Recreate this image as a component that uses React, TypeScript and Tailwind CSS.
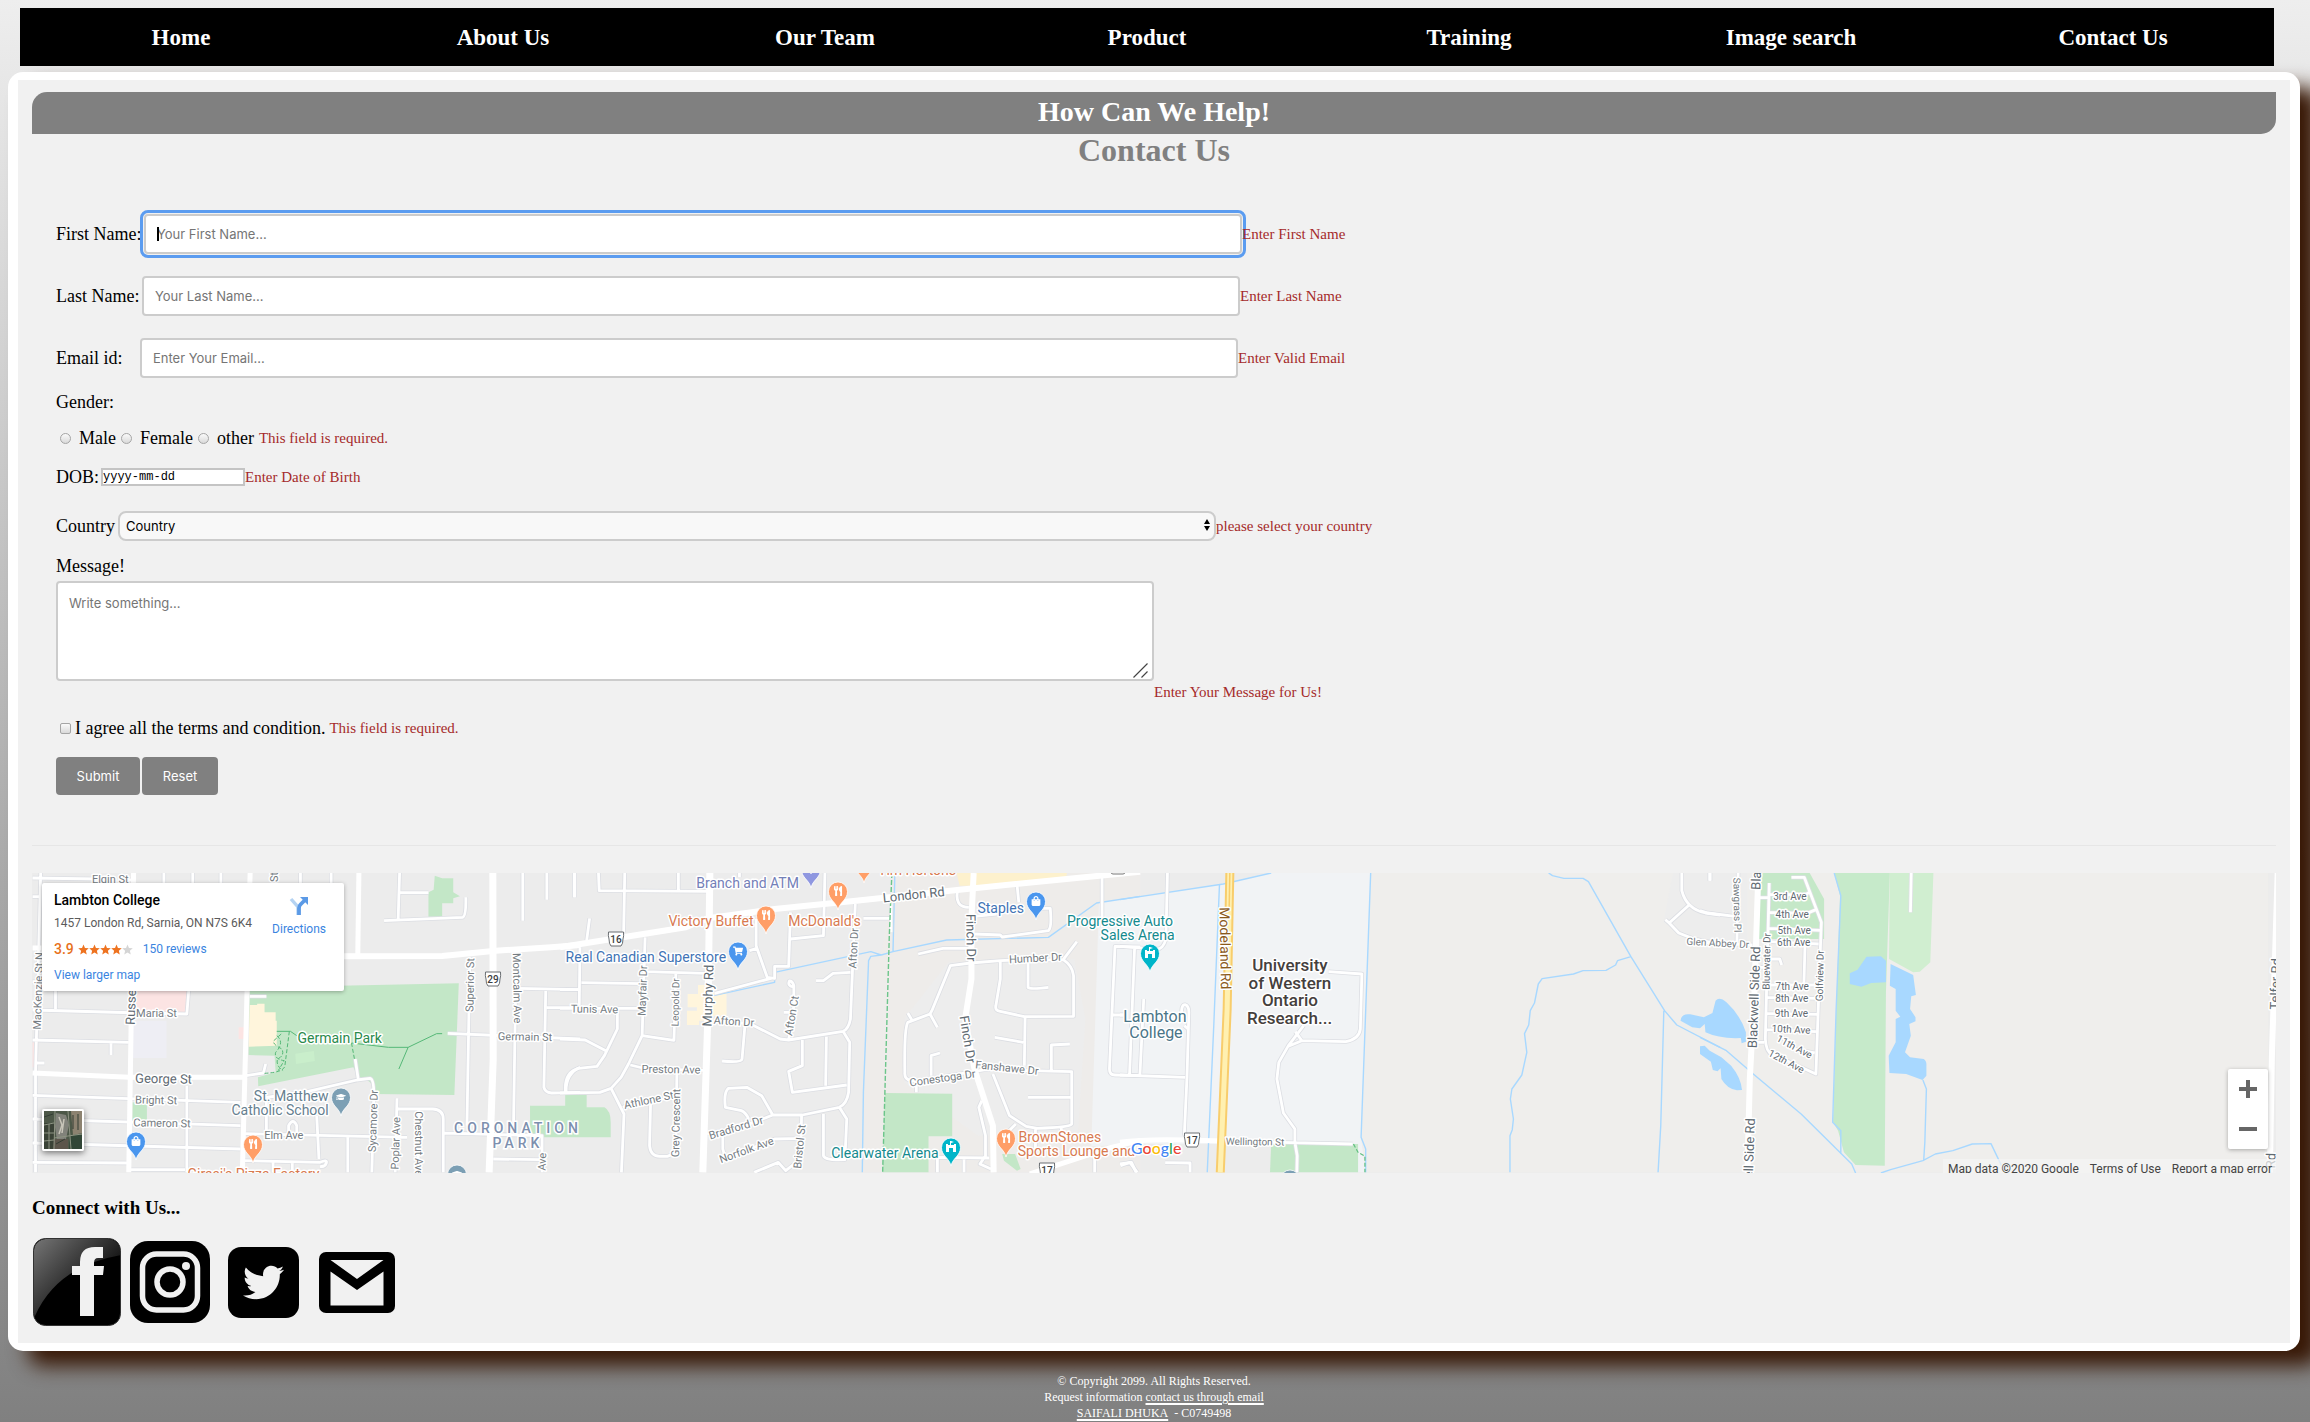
import React from "react";
import { FaTwitter, FaUtensils, FaShoppingCart, FaShoppingBag, FaGraduationCap, FaDollarSign } from "react-icons/fa";

const NAV = ["Home", "About Us", "Our Team", "Product", "Training", "Image search", "Contact Us"];

/* ---------- Map drawing ---------- */

type Tile = { x: number; k: number };
const TILE_Y = 860;
const TILE_KY = 1 / 3;
const A: Tile = { x: 0, k: 0.37 };
const B: Tile = { x: 560, k: 0.37 };
const C: Tile = { x: 1120, k: 0.3827 };
const D: Tile = { x: 1700, k: 0.389 };

function TileGroup({ t, children }: { t: Tile; children: React.ReactNode }) {
  return <g transform={`translate(${t.x} ${TILE_Y}) scale(${t.k} ${TILE_KY})`}>{children}</g>;
}

function Line({ d, w, c, dash }: { d: string; w: number; c: string; dash?: string }) {
  return (
    <path d={d} fill="none" stroke={c} strokeWidth={w} strokeDasharray={dash} strokeLinejoin="round" strokeLinecap="butt" vectorEffect="non-scaling-stroke" />
  );
}

const MINOR: [Tile, string][] = [
  [A, "M88 57 L262 60 M335 62 L355 63 M443 42V72 M521 42V72 M597 42V72 M812 42V72 M895 42V72 M1080 42 L1076 184 M1080 101 H1158 M1038 185 L1250 175 Q1260 173 1259 115 M1413 42 V185 M1478 42 V122 M1552 42 V115 M110 42 L96 640 V940 M88 113 H110 M88 368 H108 M150 396 V450 M88 453 L380 462 L505 465 L510 396 M88 543 L348 550 M300 550 V588 M96 612 H120 M505 680 V940 M88 709 L650 730 M88 780 L650 800 M88 852 L650 870 M88 910 L350 912 M350 932 H500"],
  [A, "M660 824 L1100 835 M720 722 V820 M780 828 V800 Q792 775 802 800 V828 M856 770 L862 900 M660 905 L865 910 Q885 900 882 912 Q878 925 865 922 M675 412 H720 M665 650 L712 642 L718 615 M690 720 L830 698 L965 663 L1000 658 Q1012 660 1010 720 L1005 940 M960 600 L968 660 M1073 718 L1068 940 M1073 750 H1170 Q1198 752 1198 780 V940 M1132 750 L1130 940 M1198 822 L1465 830 V940 M940 832 V940 M738 905V940 M790 905V940 M1270 295 L1262 800 M1395 290 L1388 790 M1210 523 L1568 540 M1400 388 L1568 392 M1475 392 L1470 685 Q1473 700 1490 702 L1568 700 M1478 446 H1568 M1530 700 Q1528 645 1568 625 M1333 900 L1460 902"],
  [B, "M40 42 V115 M104 42 L106 95 L400 97 M175 42 L172 220 M320 42 V97 M485 42 V55 M80 178 L72 245 M54 265 L52 440 M0 392 H52 M58 371 L220 374 M230 235 L222 530 L185 615 L165 655 L138 688 L108 700 L0 702 M230 338 L395 343 M313 345 L308 544 L222 530 M0 448 H220 M155 455 L155 510 L120 590 L100 622 L50 628 Q10 640 15 700 M0 540 L68 543 L124 575 M190 618 L235 630 L390 634 M138 688 L173 765 L166 940 M170 745 L200 730 L320 715 M316 635 L313 870 Q310 885 290 892 H270 Q245 892 242 860 L245 725"],
  [B, "M530 180 L530 260 L560 355 L580 358 V322 H618 L623 160 M512 275 L532 268 M623 240 L712 230 L716 42 M798 135 L785 480 Q780 510 765 517 L618 543 L595 540 L515 495 L415 483 M418 403 L580 355 M820 178 H892 M895 130 V220 M785 340 L738 343 L712 365 H692 M618 543 L632 440 L632 380 Q628 365 620 366 Q614 380 630 384 M605 460 H625 M500 498 L492 600 Q490 612 438 606 M655 543 L655 620 L618 637 L628 700 L775 678 M720 533 L718 680 M765 517 L783 550 L780 700 Q775 735 755 745 L655 768 L575 768 L500 800 L398 825 M575 768 L545 710 L505 685 L455 688 Q442 700 447 745 L490 755 Q502 760 510 780 M440 830 V870 Q445 900 460 895 L580 840 L655 838 M653 768 L650 900 L610 935 L590 910 L525 940 M712 765 V890 Q715 905 770 902 L775 780 L755 745"],
  [B, "M1235 75 L1240 130 M1075 92 Q1065 145 1105 145 M1120 225 L1190 228 L1195 234 L1320 215 Q1330 205 1325 148 H1290 M1120 172 L1180 165 M968 285 L1035 268 H1110 M1110 312 L1055 320 L1005 455 L1000 465 L940 490 Q930 510 932 640 Q930 662 950 665 L970 665 L1150 632 L1270 635 M940 462 L952 485 M1000 465 L1020 505 M1110 312 L1190 305 L1230 303 L1360 302 M1190 305 L1190 360 L1178 440 Q1175 455 1190 457 L1255 473 L1388 472 V350 Q1385 320 1360 302 L1397 248 M1265 312 V385 Q1270 392 1320 385 M1175 535 L1252 550 M1257 473 L1255 620 M1270 635 L1383 638 V795 Q1380 805 1290 808 L1260 802 L1215 770 L1170 645 M1328 635 V558 L1378 555 M1265 715 H1380 M1003 650 V590 L1027 582 M963 665 V700 M1140 725 L1132 745 L1150 830 V890 L1135 915 L1165 930 M1018 895 L1160 897 M1092 897 V940 M1020 897 V940 M1232 795 L1200 830 M1285 808 V870 M1355 800V840 M1445 890 V940 M1515 920 L1540 910 L1560 940 M1465 42 V205 M1495 468 H1530 M1568 264 L1500 262 L1485 630 Q1485 648 1500 648 L1568 650"],
  [C, "M124 42 L120 240 Q112 275 90 270 L0 262 M38 270 L25 645 M62 420 L52 648 M0 648 L170 655 M0 468 H10 M162 475 Q158 437 170 437 Q180 440 180 460 L175 655 L168 830 M168 500 L178 510 M270 846 L608 855 M0 915 L30 910 L42 940 M118 911 L183 912 V940 M480 500 L440 560 L415 610 L410 660 L427 762 L457 810 V850 L463 890 L462 940 M458 518 L475 545 M440 562 L475 545 L590 548 Q625 540 628 510 L632 345 L545 338 M1468 42 V95 Q1480 150 1530 162 L1568 168 M1490 135 L1435 192 L1425 182 M1435 192 L1460 222 L1500 240 L1568 255 M1541 42 V65"],
  [D, "M178 72 L168 540 Q170 580 185 585 L298 645 L310 250 L312 190 L268 55 H235 M150 116 H175 M178 107 H270 L282 100 M178 160 L275 163 L298 152 M175 208 L310 214 M178 248 L305 255 M172 378 H305 M170 415 L303 418 M170 463 L300 466 M170 512 L298 518 M270 258 L267 378 M175 300 H205 L210 318 M145 325 H165 M145 550 H165 M208 530 L240 570 L295 582 M543 42 L541 160 M98 42 L95 248 M26 42 V65 M0 155 L20 162 L90 172 M0 250 L135 258"],
];

const MAJOR: [Tile, string, number][] = [
  [A, "M361 42 L348 940 M676 42 L655 940", 5],
  [A, "M970 42 L967 285", 5],
  [A, "M88 267 H112 M88 642 L350 655 H665", 5],
  [A, "M920 292 L1195 291 L1340 275 L1490 265 L1568 258", 6],
  [A, "M1332 42 L1333 600 L1322 940", 7],
  [B, "M405 42 L400 460 L386 940", 7],
  [B, "M0 265 L340 205 L400 178 L580 150 L800 125 L1080 92 L1568 38", 6],
  [B, "M1118 42 L1112 180 L1112 360 L1095 480 L1120 630 L1170 800 L1172 940", 6],
  [B, "M1270 945 L1490 865 L1568 845", 5],
  [C, "M0 850 Q60 840 170 843 L270 846", 5],
  [D, "M150 42 L140 400 L128 660 L122 940", 6],
  [D, "M1485 42 L1470 600 L1465 940", 6],
];

const AREAS: [Tile, string, string][] = [
  [B, "#eeecea", "M905 42 H1568 V940 H817 L834 305 L868 288Z"],
  [B, "#ededed", "M930 480 L1050 310 L1390 300 L1420 480 L1400 820 L1130 830 L930 670Z"],
  [C, "#f1f3f5", "M-55 130 L0 122 L270 75 L395 42 H655 L630 835 L642 940 H440 L395 855 H60 L-75 862Z"],
  [C, "#efeeec", "M655 42 H3000 V940 H642 L630 835Z"],
  [C, "#ededed", "M1445 42 H1640 V250 L1500 245 L1420 190Z"],
  [A, "#c3e7c7", "M675 386 L1240 373 L1228 708 L1012 705 Q1010 660 968 655 L955 625 L698 682 L697 655 L745 640 L742 590 L672 588Z"],
  [A, "#fff5dc", "M675 438 H695 V434 H715 V460 H745 V485 H748 V560 L672 563Z"],
  [A, "#c9eecb", "M798 584 L848 576 L851 606 L800 615Z"],
  [A, "#c3e7c7", "M1175 50 L1195 58 H1225 V100 L1243 112 L1225 118 V133 H1195 V173 H1158 V100 L1172 92Z"],
  [A, "#fce4e3", "M367 396 H505 V460 H367Z M645 505H660V540H645Z M88 550H95V625H88Z"],
  [A, "#eeeef4", "M358 485 H450 V597 H358Z"],
  [A, "#c3e7c7", "M358 730 H397 V783 H358Z"],
  [B, "#c3e7c7", "M-81 740 H14 V708 H72 V745 H120 Q137 755 137 790 V835 H-81Z"],
  [B, "#c3e7c7", "M878 702 L1060 704 V832 H996 V940 H872Z M1195 885 H1230 L1245 930 L1235 935 L1200 905Z"],
  [B, "#fff5dc", "M345 405 H373 V378 H400 V402 H450 V470 H410 V485 H376 V498 H343 V455 H370 V445 H345Z"],
  [B, "#fdf1cd", "M1072 42 H1370 L1368 55 L1120 80 H1080Z"],
  [C, "#c3e7c7", "M395 855 H622 V940 H392Z"],
  [D, "#c5e8c8", "M152 42 H282 L319 120 V240 H150Z"],
  [D, "#c6eaca", "M345 42 H488 L478 400 L475 920 L400 918 L370 880 L355 815 L342 790 L350 450 L360 110Z"],
  [D, "#d0eed0", "M488 42 H600 L592 310 L565 338 L548 340 L486 300Z"],
  [D, "#a8d8ff", "M428 293 L465 292 L478 305 V370 L440 372 L415 383 L385 375 V343 L405 332Z M490 315 L548 348 L555 408 L543 412 L540 450 L554 475 V487 L538 495 L542 530 L527 580 L540 595 L575 600 Q583 605 582 620 V650 L572 663 L530 645 L487 642 L485 590 L503 550 V480 L515 473 L503 455 V390 L488 380Z"],
  [D, "#a8d8ff", "M-50 485 Q-48 462 -25 466 L10 475 L32 462 L40 425 Q50 412 68 430 Q105 470 118 520 V548 L107 553 L105 537 Q50 540 14 520 L12 495 L0 508 L-20 505Z M0 562 L12 560 L25 575 L55 595 L80 620 Q105 655 108 693 L95 694 Q70 690 55 660 L53 628 L45 637 L33 633 L28 608 L0 585Z"],
];

const WATER: [Tile, string][] = [
  [B, "M415 410 L580 370 V340 L840 278 L868 288 L900 278 L1045 243 L1320 235 L1450 132 L1568 112 M905 42 L900 278 M868 288 L840 292 L834 305 L820 700 L817 940"],
  [C, "M0 122 L270 75 L395 42 M260 75 L245 500 L228 940 M655 42 L630 835 L642 870 V940 M1120 42 L1130 50 L1160 58 H1210 L1224 68 L1335 293 L1423 455 L1455 498 L1568 565 M1335 293 L1300 305 L1295 318 L1270 334 L1210 335 L1185 345 L1103 359 L1093 375 L1083 432 L1072 455 L1068 498 L1057 524 L1063 580 L1050 648 L1024 690 L1020 720 L1028 780 L1025 812 L1019 830 V940 M1421 455 L1413 800 L1406 940"],
  [D, "M345 42 L362 110 L350 450 L341 790 L362 815 V885 M0 535 L68 575 L140 648 L260 765 L390 915 L400 942 M573 663 L582 690 L578 850 L575 905 M465 942 L490 932 L573 905 L605 885 L650 875 L700 855 L748 854 L775 920"],
];

type LabelSpec = [Tile, string, number, number, number, string, number?, number?];
const GREY = "#757c82";
const SLATE = "#5f6a72";
const LABELS: LabelSpec[] = [
  [A, "Elgin St", 298, 62, 11, GREY],
  [A, "St", 743, 54, 11, GREY, -90],
  [A, "MacKenzie St N", 104, 396, 11, GREY, -88],
  [A, "Russell", 354, 435, 13, SLATE, -88],
  [A, "Maria St", 423, 464, 11, GREY],
  [A, "George St", 442, 659, 13, SLATE, 1],
  [A, "Bright St", 422, 724, 11, GREY, 1],
  [A, "Cameron St", 438, 793, 11, GREY, 1],
  [A, "Elm Ave", 767, 828, 11, GREY],
  [A, "Sycamore Dr", 1009, 786, 11, GREY, -88],
  [A, "Poplar Ave", 1070, 853, 11, GREY, -88],
  [A, "Chestnut Ave", 1131, 854, 11, GREY, 90],
  [A, "Superior St", 1271, 378, 11, GREY, -89],
  [A, "Montcalm Ave", 1397, 387, 11, GREY, 89],
  [A, "Germain St", 1419, 534, 11, GREY, 1],
  [A, "Ave", 1466, 908, 11, GREY, -88],
  [B, "Tunis Ave", 93, 451, 11, GREY, 1],
  [B, "Mayfair Dr", 224, 395, 11, GREY, -88],
  [B, "Leopold Dr", 312, 430, 10, GREY, -89],
  [B, "Murphy Rd", 400, 410, 13, SLATE, -88],
  [B, "Afton Dr", 470, 488, 11, GREY, 4],
  [B, "Afton Ct", 627, 470, 11, GREY, -80],
  [B, "Afton Dr", 794, 268, 11, GREY, -87],
  [B, "London Rd", 956, 107, 13, SLATE, -6],
  [B, "Finch Dr", 1111, 236, 13, SLATE, 89],
  [B, "Finch Dr", 1102, 541, 13, SLATE, 81],
  [B, "Humber Dr", 1285, 298, 11, GREY, -3],
  [B, "Preston Ave", 300, 632, 11, GREY, 1],
  [B, "Athlone St", 240, 724, 11, GREY, -12],
  [B, "Grey Crescent", 314, 792, 11, GREY, -89],
  [B, "Bradford Dr", 476, 807, 11, GREY, -17],
  [B, "Norfolk Ave", 504, 874, 11, GREY, -20],
  [B, "Bristol St", 648, 863, 11, GREY, -84],
  [B, "Conestoga Dr", 1034, 658, 11, GREY, -8],
  [B, "Fanshawe Dr", 1208, 627, 11, GREY, 6],
  [C, "Wellington St", 353, 848, 10, GREY, 1],
  [C, "Glen Abbey Dr", 1562, 252, 10, GREY, 3],
  [C, "Modeland Rd", 275, 268, 14, "#8a5a1c", 89],
  [D, "Sawgrass Pl", 96, 138, 10, GREY, 89],
  [D, "Blackwell Side Rd", 148, -60, 13, SLATE, -88],
  [D, "Blackwell Side Rd", 139, 415, 13, SLATE, -88],
  [D, "Blackwell Side Rd", 125, 930, 13, SLATE, -88],
  [D, "Bluewater Dr", 171, 307, 10, SLATE, -89],
  [D, "Golfview Dr", 308, 350, 10, SLATE, -89],
  [D, "3rd Ave", 231, 113, 10, SLATE],
  [D, "4th Ave", 237, 165, 10, SLATE],
  [D, "5th Ave", 242, 213, 10, SLATE],
  [D, "6th Ave", 241, 251, 10, SLATE],
  [D, "7th Ave", 237, 381, 10, SLATE],
  [D, "8th Ave", 236, 417, 10, SLATE],
  [D, "9th Ave", 235, 464, 10, SLATE],
  [D, "10th Ave", 234, 511, 10, SLATE, 3],
  [D, "11th Ave", 243, 563, 10, SLATE, 28],
  [D, "12th Ave", 222, 607, 10, SLATE, 28],
  [D, "Telfer Rd", 1479, 375, 13, SLATE, -88],
  [D, "Rd", 1467, 905, 13, SLATE, -88],
  [A, "Germain Park", 918, 536, 14, "#2a8a4c"],
  [A, "St. Matthew", 787, 711, 14, "#66808f"],
  [A, "Catholic School", 757, 753, 14, "#66808f"],
  [A, "Girasi's Pizza Factory", 685, 944, 14, "#d87a50"],
  [B, "Branch and ATM", 507, 71, 14, "#7480b8"],
  [B, "Tim Hortons", 965, 34, 14, "#d87a50"],
  [B, "Victory Buffet", 408, 186, 14, "#d87a50"],
  [B, "McDonald's", 715, 186, 14, "#d87a50"],
  [B, "Real Canadian Superstore", 232, 293, 14, "#4274b5"],
  [B, "Staples", 1191, 146, 14, "#4274b5"],
  [B, "Clearwater Arena", 878, 881, 14, "#148a8e"],
  [B, "BrownStones", 1351, 833, 14, "#d87a50"],
  [B, "Sports Lounge and", 1396, 875, 14, "#d87a50"],
  [C, "Progressive Auto", 0, 185, 14, "#148a8e"],
  [C, "Sales Arena", 46, 227, 14, "#148a8e"],
  [C, "Lambton", 91, 471, 16, "#4a7588"],
  [C, "College", 94, 519, 16, "#4a7588"],
  [C, "University", 444, 317, 17, "#45403d", 0, 500],
  [C, "of Western", 444, 371, 17, "#45403d", 0, 500],
  [C, "Ontario", 444, 424, 17, "#45403d", 0, 500],
  [C, "Research...", 443, 478, 17, "#45403d", 0, 500],
];

function MapLabel({ spec }: { spec: LabelSpec }) {
  const [t, text, x, y, size, color, rot = 0, weight = 400] = spec;
  const px = t.x + x * t.k;
  const py = TILE_Y + y * TILE_KY;
  return (
    <text x={px} y={py} transform={rot ? `rotate(${rot} ${px} ${py})` : undefined} fontSize={size} fontWeight={weight} fill={color} stroke="#ffffff" strokeWidth={3} strokeLinejoin="round" paintOrder="stroke" textAnchor="middle" dominantBaseline="central">
      {text}
    </text>
  );
}

type Glyph = React.ComponentType<{ x?: number; y?: number; size?: number; color?: string }>;

function Arena() {
  return <path d="M-5 4V-4H-3V-3H-1V-7H0L3-6L0-5V-3H3V-4H5V4H2V0H-2V4Z" fill="#fff" />;
}

function Pin({ x, y, color, Icon }: { x: number; y: number; color: string; Icon?: Glyph }) {
  return (
    <g transform={`translate(${x} ${y})`}>
      <path d="M0 18 C-1.500 10-9.500 8-9.500-.500 A9.500 9.500 0 1 1 9.500-.500 C9.500 8 1.500 10 0 18Z" fill={color} stroke="#fff" strokeWidth={0.8} />
      {Icon ? <Icon x={-5} y={-6} size={10} color="#fff" /> : <Arena />}
    </g>
  );
}

function Shield({ x, y, n }: { x: number; y: number; n: string }) {
  return (
    <g transform={`translate(${x} ${y})`}>
      <path d="M-7.500-7H7.500Q8-3 7 0Q7 5 5 7H-5Q-7 5-7 0Q-8-3-7.500-7Z" fill="#fff" stroke="#6b6f73" strokeWidth={1} strokeLinejoin="round" />
      <text fontSize={10} fontWeight={500} fill="#3c4043" textAnchor="middle" dominantBaseline="central">{n}</text>
    </g>
  );
}

function MapDrawing() {
  return (
    <svg className="block h-[300px] w-full" viewBox="32 874 2244 300" preserveAspectRatio="xMidYMid slice" fontFamily='Roboto, "Liberation Sans", sans-serif' role="img" aria-label="Map around Lambton College">
      <rect x="0" y="860" width="2310" height="330" fill="#ececec" />
      {AREAS.map(([t, c, d], i) => (
        <TileGroup key={i} t={t}><path d={d} fill={c} /></TileGroup>
      ))}
      {WATER.map(([t, d], i) => (
        <TileGroup key={i} t={t}><Line d={d} w={1.4} c="#a8d8ff" /></TileGroup>
      ))}
      {MINOR.map(([t, d], i) => (
        <TileGroup key={i} t={t}><Line d={d} w={4.4} c="#dcdee3" /></TileGroup>
      ))}
      {MINOR.map(([t, d], i) => (
        <TileGroup key={i} t={t}><Line d={d} w={2.8} c="#ffffff" /></TileGroup>
      ))}
      {MAJOR.map(([t, d, w], i) => (
        <TileGroup key={i} t={t}><Line d={d} w={w} c="#ffffff" /></TileGroup>
      ))}
      <TileGroup t={C}>
        <Line d="M287 42 L280 450 L262 940" w={9} c="#f8cd6c" />
        <Line d="M287 42 L280 450 L262 940" w={5} c="#fff0b0" />
        <Line d="M287 42 L285 160" w={1.5} c="#f8cd6c" />
        <Line d="M610 855 L622 880 L640 892 V940" w={1.2} c="#5fbf7f" dash="4 2" />
      </TileGroup>
      <TileGroup t={A}>
        <Line d="M950 552 L1050 565 H1103 L1180 524 H1195 M1103 565 L1078 630 M748 517 H785 L802 530" w={1} c="#55b877" />
        <Line d="M950 552 L958 600 M782 517 L770 620 Q768 640 715 643 M760 525 L740 545 Q735 555 762 570 Q770 590 750 600 Q745 620 765 635 M748 530 Q770 550 745 580 Q740 600 768 605 L752 635" w={1} c="#55b877" dash="4 2" />
      </TileGroup>
      <TileGroup t={B}>
        <Line d="M897 42 L890 230 L872 940" w={1.4} c="#6cc58a" dash="5 2" />
      </TileGroup>

      {LABELS.map((l, i) => <MapLabel key={i} spec={l} />)}
      {([["CORONATION", 518, 1129], ["PARK", 518, 1144]] as const).map(([s, x, y]) => (
        <text key={s} x={x} y={y} className="tracking-[4px]" fontSize={14} fontWeight={500} fill="#7d8fae" stroke="#fff" strokeWidth={3} paintOrder="stroke" textAnchor="middle" dominantBaseline="central">{s}</text>
      ))}

      <Shield x={493} y={980} n="29" />
      <Shield x={616} y={940} n="16" />
      <Shield x={1192} y={1141} n="17" />
      <Shield x={1047} y={1171} n="17" />
      <rect x={1111} y={868} width={14} height={7} rx={2} fill="#fff" stroke="#777" />

      <Pin x={136} y={1143} color="#4a96ee" Icon={FaShoppingBag} />
      <Pin x={253} y={1146} color="#ff9e67" Icon={FaUtensils} />
      <Pin x={341} y={1099} color="#7c9fb4" Icon={FaGraduationCap} />
      <Pin x={457} y={1176} color="#7c9fb4" Icon={FaGraduationCap} />
      <Pin x={811} y={871} color="#8f97e0" Icon={FaDollarSign} />
      <Pin x={838} y={893} color="#ff9e67" Icon={FaUtensils} />
      <Pin x={864} y={866} color="#ff9e67" Icon={FaUtensils} />
      <Pin x={766} y={917} color="#ff9e67" Icon={FaUtensils} />
      <Pin x={738} y={953} color="#4a96ee" Icon={FaShoppingCart} />
      <Pin x={1036} y={903} color="#4a96ee" Icon={FaShoppingBag} />
      <Pin x={951} y={1149} color="#00b5c9" />
      <Pin x={1150} y={955} color="#00b5c9" />
      <Pin x={1006} y={1140} color="#ff9e67" Icon={FaUtensils} />
      <Pin x={1290} y={1181} color="#7c9fb4" Icon={FaGraduationCap} />

      <text x={1131} y={1155} fontSize={16} fontWeight={500} fontFamily="Lato, Roboto, sans-serif" stroke="#fff" strokeWidth={3} paintOrder="stroke">
        <tspan fill="#4285f4">G</tspan><tspan fill="#ea4335">o</tspan><tspan fill="#fbbc05">o</tspan><tspan fill="#4285f4">g</tspan><tspan fill="#34a853">l</tspan><tspan fill="#ea4335">e</tspan>
      </text>
    </svg>
  );
}

function Star({ on }: { on: boolean }) {
  return (
    <svg className="size-[11px]" viewBox="0 0 24 24" aria-hidden="true">
      <path d="M12 1l3.200 7.600 8.300.700-6.300 5.400 1.900 8.100L12 18.500 4.900 22.800l1.900-8.100L.500 9.300l8.300-.700z" fill={on ? "#ee7320" : "#d5d5d5"} />
    </svg>
  );
}

function MapSection() {
  return (
    <section className="relative mt-[27px] overflow-hidden font-[Roboto,'Liberation_Sans',sans-serif]">
      <MapDrawing />
      <div className="absolute top-2.5 left-2.5 flex h-[108px] w-[302px] justify-between rounded-[2px] bg-white pr-[18px] pl-3 text-[12px] leading-[16px] shadow-[0_1px_4px_rgba(0,0,0,0.3)]">
        <div className="pt-[9px]">
          <h3 className="text-[14px] leading-[16px] font-medium text-black">Lambton College</h3>
          <p className="mt-[7px] text-[#5b5b5b]">1457 London Rd, Sarnia, ON N7S 6K4</p>
          <p className="mt-[10px] flex items-center">
            <span className="text-[14px] font-medium text-[#e7711b]">3.9</span>
            <span className="mr-[10px] ml-1 flex">
              {[1, 2, 3, 4, 5].map((n) => <Star key={n} on={n < 5} />)}
            </span>
            <a href="#reviews" className="text-[#3a84df]">150 reviews</a>
          </p>
          <a href="#map" className="mt-[10px] block text-[#3a84df]">View larger map</a>
        </div>
        <a href="#directions" className="flex flex-col items-center pt-[13px] text-[#3a84df]">
          <svg className="size-[20px]" viewBox="0 0 20 20" aria-hidden="true">
            <path d="M2 3 L9 11 V19" fill="none" stroke="#b5d3f2" strokeWidth="3.400" />
            <path d="M10 19 V12 Q10 10 11.500 8.500 L15.500 4.500" fill="none" stroke="#5b9ae6" strokeWidth="3.800" />
            <path d="M11 1 H19 V9Z" fill="#5b9ae6" />
          </svg>
          <span className="mt-[5px]">Directions</span>
        </a>
      </div>
      <button type="button" aria-label="Show satellite imagery" className="absolute bottom-[22px] left-2.5 size-[42px] rounded-[2px] border-2 border-white shadow-[0_2px_6px_rgba(0,0,0,0.5)]">
        <svg className="size-full" viewBox="0 0 38 38" aria-hidden="true">
          <rect width="38" height="38" fill="#4d5848" />
          <path d="M0 12h10v26H0z" fill="#3a4236" />
          <path d="M12 2l10 2 3 10-3 14-9 2-2-14z" fill="#81827a" />
          <path d="M27 0h11v22l-9 2z" fill="#8c8270" />
          <path d="M26 24h12v14H25z" fill="#324637" />
          <path d="M10 28h14v10H9z" fill="#5c554b" />
          <path d="M24 0l3 38M11 0l-1 38M0 14l10-2M0 22h10M0 30l10-1M5 13v25M10 27l28-4" stroke="#8d9382" fill="none" />
          <path d="M15 6l3 8-3 9M20 8l-2 14" stroke="#c8c5b9" strokeWidth="1.500" fill="none" />
          <path d="M12 33l9-5M0 6l9-3M29 4v14M34 3v16" stroke="#333d33" fill="none" />
        </svg>
      </button>
      <div className="absolute right-2 bottom-6 flex w-10 flex-col rounded-[2px] bg-white shadow-[0_1px_4px_rgba(0,0,0,0.3)]">
        <button type="button" aria-label="Zoom in" className="flex h-10 items-center justify-center">
          <svg className="size-[18px]" viewBox="0 0 18 18" aria-hidden="true"><path d="M0 9H18M9 0V18" stroke="#666" strokeWidth="4" /></svg>
        </button>
        <button type="button" aria-label="Zoom out" className="flex h-10 items-center justify-center">
          <svg className="size-[18px]" viewBox="0 0 18 18" aria-hidden="true"><path d="M0 9H18" stroke="#666" strokeWidth="4" /></svg>
        </button>
      </div>
      <div className="absolute right-0 bottom-0 flex h-[14px] gap-[11px] overflow-hidden bg-[#f5f5f5]/70 pr-1 pl-[5px] text-[12px] leading-[20px] text-[#444]">
        <span>Map data ©2020 Google</span>
        <a href="#terms">Terms of Use</a>
        <a href="#report">Report a map error</a>
      </div>
    </section>
  );
}

/* ---------- Form ---------- */

function FieldError({ children }: { children: React.ReactNode }) {
  return <span className="text-[15px] whitespace-nowrap text-[#a52a2a]">{children}</span>;
}

const FIELD = "h-10 w-1/2 rounded-[4px] border-2 border-[#ccc] bg-white px-[11px] font-[Inter,sans-serif] text-[13px] text-black placeholder:text-[#757575]";
const CHOICE = "size-[11px] shrink-0 appearance-none border border-[#a5a5a5] bg-gradient-to-b from-[#fafafa] to-[#dadada]";

function ContactForm() {
  return (
    <form className="flex flex-col px-6 pt-[47px] text-[18px] leading-[22px] text-black" onSubmit={(e) => e.preventDefault()}>
      <div className="relative flex items-center">
        <label htmlFor="first" className="w-[88px] shrink-0">First Name:</label>
        <input id="first" type="text" placeholder="Your First Name..." className={`${FIELD} outline-3 outline-offset-1 outline-[#5b9cf0]`} />
        <FieldError>Enter First Name</FieldError>
        <span aria-hidden="true" className="absolute left-[101px] h-[14px] w-[2px] bg-black" />
      </div>
      <div className="mt-[22px] flex items-center">
        <label htmlFor="last" className="w-[86px] shrink-0">Last Name:</label>
        <input id="last" type="text" placeholder="Your Last Name..." className={FIELD} />
        <FieldError>Enter Last Name</FieldError>
      </div>
      <div className="mt-[22px] flex items-center">
        <label htmlFor="email" className="w-[84px] shrink-0">Email id:</label>
        <input id="email" type="email" placeholder="Enter Your Email..." className={FIELD} />
        <FieldError>Enter Valid Email</FieldError>
      </div>
      <fieldset>
        <legend className="pt-[13px]">Gender:</legend>
        <div className="mt-[14px] flex items-center gap-[5px] pl-1">
          {["Male", "Female", "other"].map((g) => (
            <label key={g} className="flex items-center gap-2">
              <input type="radio" name="gender" value={g} className={`${CHOICE} rounded-full`} />
              {g}
            </label>
          ))}
          <FieldError>This field is required.</FieldError>
        </div>
      </fieldset>
      <div className="mt-[17px] flex items-center">
        <label htmlFor="dob" className="mr-[2px]">DOB:</label>
        <input id="dob" type="text" placeholder="yyyy-mm-dd" className="h-[18px] w-36 border-2 border-[#c4c4c4] bg-white font-['Liberation_Mono',monospace] text-[12px] placeholder:text-black" />
        <FieldError>Enter Date of Birth</FieldError>
      </div>
      <div className="mt-[23px] flex items-center">
        <label htmlFor="country" className="mr-[3px]">Country</label>
        <div className="relative w-1/2">
          <select id="country" className="block h-[30px] w-full appearance-none rounded-[8px] border-2 border-[#ccc] bg-[#f8f8f8] pl-[6px] font-[Inter,sans-serif] text-[13px]">
            <option>Country</option>
          </select>
          <svg className="pointer-events-none absolute top-[8px] right-[6px] h-[12px] w-[6px]" viewBox="0 0 6 12" aria-hidden="true">
            <path d="M3 0L6 5H0ZM3 12L0 7H6Z" fill="#000" />
          </svg>
        </div>
        <FieldError>please select your country</FieldError>
      </div>
      <label htmlFor="message" className="mt-[14px]">Message!</label>
      <div className="mt-1 flex items-end">
        <div className="relative mb-[22px] w-1/2">
          <textarea id="message" placeholder="Write something..." className="block h-[100px] w-full resize-none rounded-[4px] border-2 border-[#ccc] bg-white px-[11px] py-3 font-[Inter,sans-serif] text-[13px] leading-[16px] placeholder:text-[#757575]" />
          <svg className="pointer-events-none absolute right-[6px] bottom-[3px] size-[15px]" viewBox="0 0 15 15" aria-hidden="true">
            <path d="M0.500 14.500L14.500 .500M8.500 14.500L14.500 8.500" stroke="#444" strokeWidth="1.200" />
          </svg>
        </div>
        <FieldError>Enter Your Message for Us!</FieldError>
      </div>
      <div className="mt-[14px] flex items-center gap-1 pl-1">
        <label className="flex items-center gap-1">
          <input type="checkbox" className={`${CHOICE} rounded-[2px]`} />
          I agree all the terms and condition.
        </label>
        <FieldError>This field is required.</FieldError>
      </div>
      <div className="mt-[18px] flex gap-[2px] font-[Inter,sans-serif] text-[13px] text-white">
        <button type="submit" className="h-[38px] w-[84px] rounded-[4px] bg-[#808080]">Submit</button>
        <button type="reset" className="h-[38px] w-[76px] rounded-[4px] bg-[#808080]">Reset</button>
      </div>
    </form>
  );
}

/* ---------- Social icons ---------- */

function Social() {
  return (
    <div className="mt-[19px] flex items-center pl-px">
      <a href="#facebook" aria-label="Facebook">
        <svg className="size-[88px]" viewBox="0 0 88 88">
          <defs>
            <linearGradient id="gloss" x1="0" y1="0" x2="0.700" y2="0.600">
              <stop offset="0" stopColor="#777" />
              <stop offset="1" stopColor="#161616" />
            </linearGradient>
            <clipPath id="tile"><rect x="1" y="1" width="86" height="86" rx="12" /></clipPath>
          </defs>
          <rect x="0.500" y="0.500" width="87" height="87" rx="12" fill="#000" />
          <path clipPath="url(#tile)" d="M0 0H88V17Q24 28 2 78H0Z" fill="url(#gloss)" />
          <rect x="0.500" y="0.500" width="87" height="87" rx="12" fill="none" stroke="#333" />
          <path d="M47 78V37H39V28H47V24Q47 9 62 9H70V20H65Q61 20 61 25V28H71L70 37H61V78Z" fill="#f1f1f1" />
        </svg>
      </a>
      <a href="#instagram" aria-label="Instagram" className="ml-[9px]">
        <svg className="h-[82px] w-[80px]" viewBox="0 0 80 82">
          <rect width="80" height="82" rx="18" fill="#000" />
          <rect x="12.500" y="13" width="55" height="56" rx="14" fill="none" stroke="#f1f1f1" strokeWidth="5.500" />
          <circle cx="40" cy="41" r="13" fill="none" stroke="#f1f1f1" strokeWidth="5.500" />
          <circle cx="56" cy="25" r="4" fill="#f1f1f1" />
        </svg>
      </a>
      <a href="#twitter" aria-label="Twitter" className="ml-[18px] flex size-[71px] items-center justify-center rounded-[13px] bg-black">
        <FaTwitter size={41} color="#f1f1f1" />
      </a>
      <a href="#mail" aria-label="Mail" className="ml-5">
        <svg className="h-[61px] w-[76px]" viewBox="0 0 76 61">
          <rect width="76" height="61" rx="7" fill="#000" />
          <path d="M11.500 8H64.500L38 27Z M11.500 19.500L38 38L64.500 19.500V53.500H11.500Z" fill="#f1f1f1" />
        </svg>
      </a>
    </div>
  );
}

export default function App() {
  return (
    <div className="min-h-screen overflow-hidden bg-gradient-to-b from-[#eeeeee] to-[#808080] pt-2 pr-[10px] pl-2 font-['Liberation_Serif',serif]">
      <nav className="mr-[26px] ml-3 bg-black">
        <ul className="grid grid-cols-7">
          {NAV.map((n) => (
            <li key={n}>
              <a href={`#${n.toLowerCase().replace(" ", "-")}`} className="flex h-[58px] items-center justify-center pt-[2px] text-[23px] font-bold text-white">{n}</a>
            </li>
          ))}
        </ul>
      </nav>

      <main className="mt-[6px] rounded-[15px] bg-white px-[10px] py-2 shadow-[20px_15px_20px_#381806]">
        <div className="bg-[#f1f1f1] px-[14px] pt-3 pb-[17px]">
          <h1 className="h-[42px] rounded-tl-[15px] rounded-br-[15px] bg-[#808080] text-center text-[28px] leading-[40px] font-bold text-white">How Can We Help!</h1>
          <h2 className="text-center text-[32px] leading-[33px] font-bold text-[#808080]">Contact Us</h2>
          <ContactForm />
          <hr className="mt-[50px] border-t border-[#e6e6e6]" />
          <MapSection />
          <h4 className="mt-[24px] text-[19px] leading-[22px] font-bold text-black">Connect with Us...</h4>
          <Social />
        </div>
      </main>

      <footer className="mt-[22px] text-center text-[12px] leading-[16px] text-white">
        <p>© Copyright 2099. All Rights Reserved.</p>
        <p>Request information <a href="#email" className="underline decoration-2 underline-offset-2">contact us through email</a></p>
        <p><a href="#author" className="underline decoration-2 underline-offset-2">SAIFALI DHUKA</a>&nbsp; - C0749498</p>
      </footer>
    </div>
  );
}
